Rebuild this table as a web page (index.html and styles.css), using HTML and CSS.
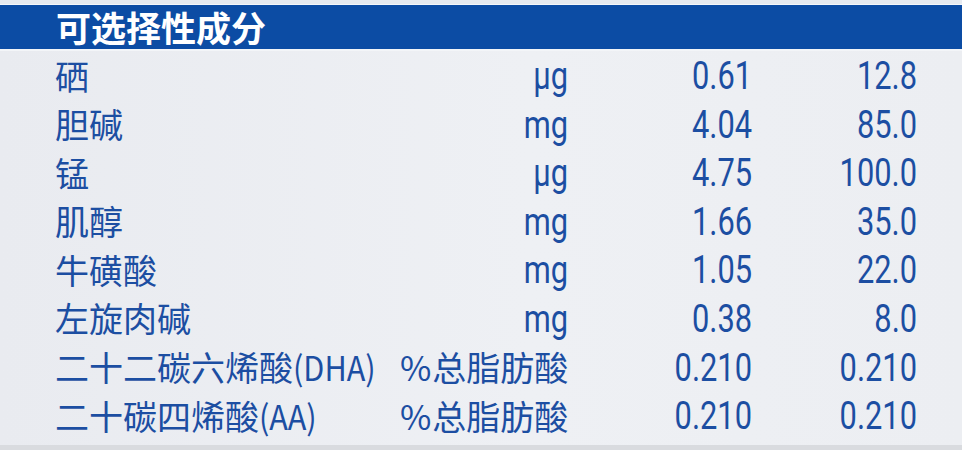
FILE: index.html
```html
<!DOCTYPE html>
<html lang="zh-CN">
<head>
<meta charset="utf-8">
<title>可选择性成分</title>
<link rel="stylesheet" href="styles.css">
</head>
<body>
<div class="page">
  <div class="top-strip"></div>
  <div class="section-bar">可选择性成分</div>
  <div class="bar-line"></div>
  <div class="table">
    <div class="row"><span class="name">硒</span><span class="unit"><span class="lat">µg</span></span><span class="val"><span class="lat">0.61</span></span><span class="val"><span class="lat">12.8</span></span></div>
    <div class="row"><span class="name">胆碱</span><span class="unit"><span class="lat">mg</span></span><span class="val"><span class="lat">4.04</span></span><span class="val"><span class="lat">85.0</span></span></div>
    <div class="row"><span class="name">锰</span><span class="unit"><span class="lat">µg</span></span><span class="val"><span class="lat">4.75</span></span><span class="val"><span class="lat">100.0</span></span></div>
    <div class="row"><span class="name">肌醇</span><span class="unit"><span class="lat">mg</span></span><span class="val"><span class="lat">1.66</span></span><span class="val"><span class="lat">35.0</span></span></div>
    <div class="row"><span class="name">牛磺酸</span><span class="unit"><span class="lat">mg</span></span><span class="val"><span class="lat">1.05</span></span><span class="val"><span class="lat">22.0</span></span></div>
    <div class="row"><span class="name">左旋肉碱</span><span class="unit"><span class="lat">mg</span></span><span class="val"><span class="lat">0.38</span></span><span class="val"><span class="lat">8.0</span></span></div>
    <div class="row"><span class="name">二十二碳六烯酸<span class="abbr">(DHA)</span></span><span class="unit"><span class="pct">%</span>总脂肪酸</span><span class="val"><span class="lat">0.210</span></span><span class="val"><span class="lat">0.210</span></span></div>
    <div class="row"><span class="name">二十碳四烯酸<span class="abbr">(AA)</span></span><span class="unit"><span class="pct">%</span>总脂肪酸</span><span class="val"><span class="lat">0.210</span></span><span class="val"><span class="lat">0.210</span></span></div>
  </div>
  <div class="bottom-strip"></div>
</div>
</body>
</html>
```

FILE: styles.css
```css
html, body {
  margin: 0;
  padding: 0;
}
body {
  width: 962px;
  height: 450px;
  overflow: hidden;
  background: #eceef2;
}
.page {
  width: 962px;
  height: 450px;
  display: flex;
  flex-direction: column;
  background: linear-gradient(90deg, #e9ebf0 0%, #eef0f4 55%, #eceef2 100%);
  font-family: "Noto Sans CJK SC", "Noto Sans", sans-serif;
  color: #1c4ea2;
}
.top-strip {
  height: 4px;
  background: #e6eaf0;
  border-bottom: 1px solid #f5f7fa;
}
.section-bar {
  height: 44px;
  background: #0c4ca4;
  color: #ffffff;
  font-weight: 700;
  font-size: 35px;
  line-height: 44px;
  padding-left: 56px;
}
.bar-line {
  height: 2px;
  background: #f3f5f8;
}
.table {
  display: flex;
  flex-direction: column;
  padding-left: 55px;
}
.row {
  display: grid;
  grid-template-columns: 345px 168px 184px 165px;
  height: 48.6px;
  align-items: center;
  font-size: 34px;
  font-weight: 400;
  line-height: 48px;
  white-space: nowrap;
}
.name {
  text-align: left;
}
.abbr {
  display: inline-block;
  transform: scaleX(0.9);
  transform-origin: left center;
}
.unit {
  text-align: right;
}
.pct {
  margin-right: 1px;
}
.val {
  text-align: right;
}
.lat {
  display: inline-block;
  font-family: Roboto, "Liberation Sans", sans-serif;
  font-weight: 400;
  font-size: 39px;
  transform: scaleX(0.79);
  transform-origin: right center;
}
.bottom-strip {
  margin-top: auto;
  height: 5px;
  background: #d9dbdf;
}
```
